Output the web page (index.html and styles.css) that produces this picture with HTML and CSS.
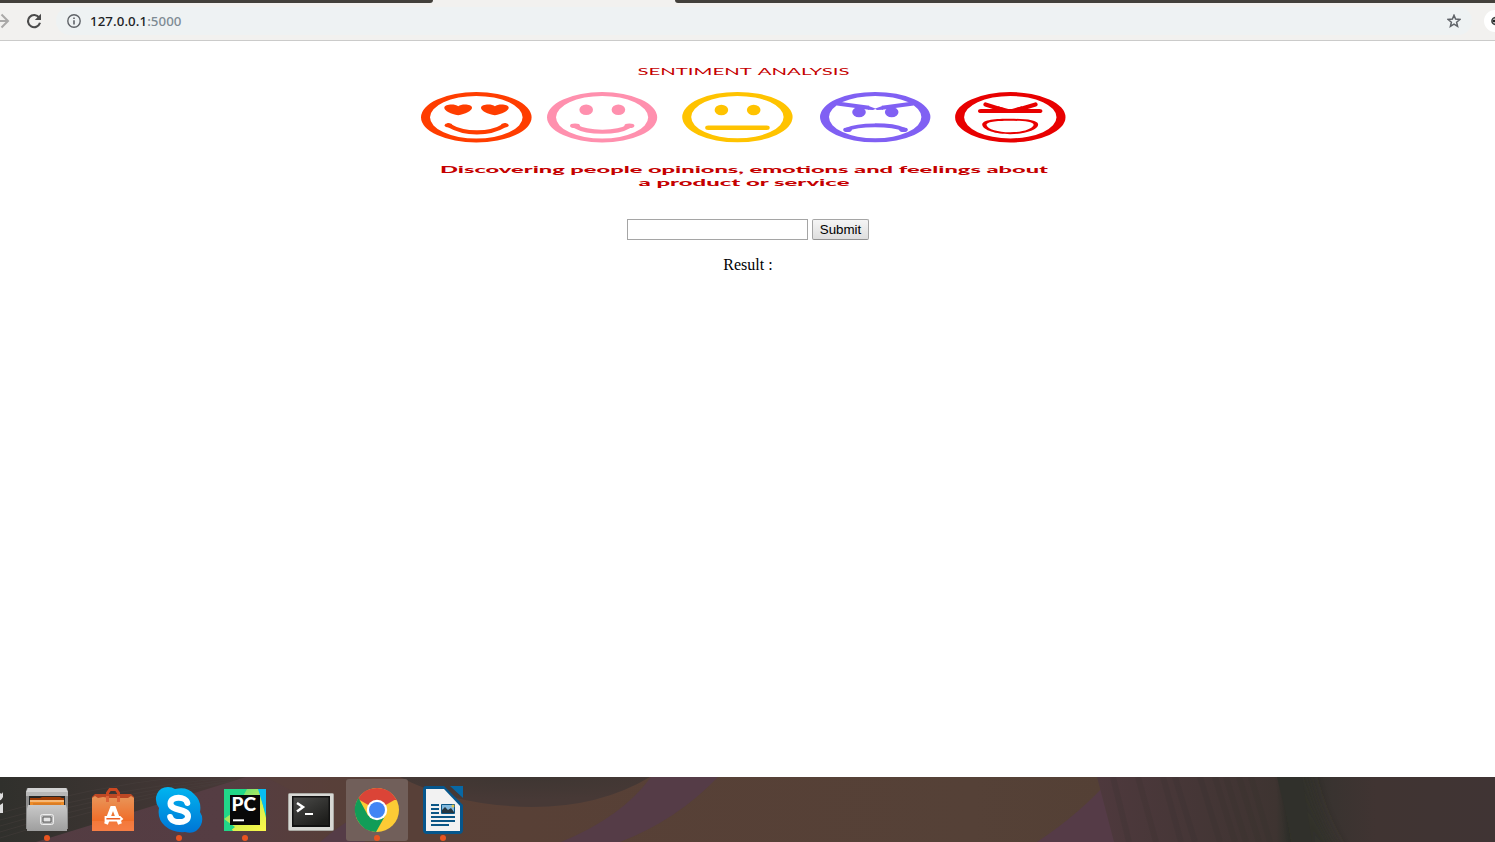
FILE: index.html
```html
<!DOCTYPE html>
<html lang="en">
<head>
<meta charset="utf-8">
<title>Sentiment Analysis</title>
<link rel="stylesheet" href="styles.css">
</head>
<body>
<header class="browser">
  <div class="tabstrip"><span class="strip-left"></span><span class="strip-right"></span></div>
  <div class="toolbar">
    <svg class="forward" width="10" height="16" viewBox="0 0 10 16"><path d="M0 8H8M1.5 1.5L8 8L1.5 14.5" fill="none" stroke="#aaa9a8" stroke-width="2"/></svg>
    <svg class="reload" width="16" height="16" viewBox="0 0 16 16"><path d="M13.2 4.7A6.1 6.1 0 1 0 14 9.8" fill="none" stroke="#4b4b4b" stroke-width="2.1"/><path d="M15 .8V7H8.8Z" fill="#4b4b4b"/></svg>
    <div class="address">
      <svg width="14" height="14" viewBox="0 0 14 14"><circle cx="7" cy="7" r="6.2" fill="none" stroke="#5f6368" stroke-width="1.4"/><path d="M7 6.2V10.6M7 3.4V5" stroke="#5f6368" stroke-width="1.6"/></svg>
      <span class="url">127.0.0.1<span class="port">:5000</span></span>
      <svg class="star" width="14" height="14" viewBox="0 0 14 14"><path d="M7 1.3L8.6 5.1L12.9 5.5L9.6 8.2L10.6 12.4L7 10.2L3.4 12.4L4.4 8.2L1.1 5.5L5.4 5.1Z" fill="none" stroke="#5f6368" stroke-width="1.5"/></svg>
    </div>
    <svg class="extension" width="11" height="22" viewBox="0 0 11 22"><circle cx="11" cy="11" r="11" fill="#fff"/><circle cx="11.5" cy="11" r="3.6" fill="#b9bcbc" stroke="#3d4141" stroke-width="1.5"/><path d="M9 10H11V12H9Z" fill="#222"/></svg>
  </div>
</header>

<main class="page">
  <svg class="banner" width="656" height="140" viewBox="415 55 656 140">
    <g fill="#c50000">
      <text x="637.5" y="75" font-size="10" textLength="212" lengthAdjust="spacingAndGlyphs">SENTIMENT <tspan dx="1">ANALYSIS</tspan></text>
      <g font-weight="900">
        <text x="440" y="173.4" font-size="10.2" textLength="608" lengthAdjust="spacingAndGlyphs">Discovering people opinions, emotions and feelings about</text>
        <text x="638.5" y="186.4" font-size="10.2" textLength="211" lengthAdjust="spacingAndGlyphs">a product or service</text>
      </g>
    </g>
    <g fill="#ff3d00">
      <path fill-rule="evenodd" d="M421 117.3a55.3 25.2 0 1 0 110.6 0a55.3 25.2 0 1 0-110.6 0ZM430 117.3a46.3 21.3 0 1 1 92.6 0a46.3 21.3 0 1 1-92.6 0Z"/>
      <path id="heart" d="M458.2 115.3C451 114 444.3 111 444.3 107.8C444.5 104 455 103.7 458.2 106.2C461.5 103.7 472 104 472 107.8C472 111 465 114 458.2 115.3Z"/>
      <use href="#heart" x="36.7"/>
      <path d="M448.5 125.2C465 134.8 489 134.8 505 125.2" fill="none" stroke="#ff3d00" stroke-width="4.2" stroke-linecap="round"/>
      <ellipse cx="448.5" cy="125.2" rx="3.8" ry="2"/><ellipse cx="504.8" cy="125.2" rx="3.8" ry="2"/>
    </g>
    <g fill="#ff90ae">
      <path fill-rule="evenodd" d="M547 117.3a55.1 25.2 0 1 0 110.2 0a55.1 25.2 0 1 0-110.2 0ZM556 117.3a46.1 21.3 0 1 1 92.2 0a46.1 21.3 0 1 1-92.2 0Z"/>
      <ellipse cx="586.2" cy="109.8" rx="6.8" ry="5.3"/><ellipse cx="618.4" cy="109.8" rx="6.8" ry="5.3"/>
      <path d="M575.5 126.4C588 133.5 617 133.5 628.8 126.4" fill="none" stroke="#ff90ae" stroke-width="4.2" stroke-linecap="round"/>
      <ellipse cx="575" cy="125.7" rx="5" ry="2.3"/><ellipse cx="629.4" cy="125.7" rx="5" ry="2.3"/>
    </g>
    <g fill="#ffc300">
      <path fill-rule="evenodd" d="M682.2 117.1a55.2 25.2 0 1 0 110.4 0a55.2 25.2 0 1 0-110.4 0ZM691.2 117.1a46.2 21.2 0 1 1 92.4 0a46.2 21.2 0 1 1-92.4 0Z"/>
      <ellipse cx="721.4" cy="110" rx="6.8" ry="5.2"/><ellipse cx="753.7" cy="110" rx="6.8" ry="5.2"/>
      <rect x="705.2" y="125.5" width="64.5" height="4.4" rx="3" ry="2.2"/>
    </g>
    <g fill="#8060f3">
      <path fill-rule="evenodd" d="M820 117.1a55.2 25.2 0 1 0 110.4 0a55.2 25.2 0 1 0-110.4 0ZM829 117.1a46.2 21.2 0 1 1 92.4 0a46.2 21.2 0 1 1-92.4 0Z"/>
      <ellipse cx="859" cy="112.1" rx="6.8" ry="5.2"/><ellipse cx="891.7" cy="112.1" rx="6.8" ry="5.2"/>
      <path d="M837 103.5L869 107.8M913.5 103.5L882 107.8" fill="none" stroke="#8060f3" stroke-width="4" />
      <path d="M868 105.8L875.3 108.4L883 105.8V109.8L877 110L875.3 109L873 110L868 109.8Z"/>
      <path d="M847 129.6C858 124 891 123.8 904 129.6" fill="none" stroke="#8060f3" stroke-width="3.9" stroke-linecap="round"/>
      <ellipse cx="847.5" cy="129.7" rx="4.3" ry="2.3"/><ellipse cx="903.5" cy="129.7" rx="4.3" ry="2.3"/>
    </g>
    <g fill="#e80000">
      <path fill-rule="evenodd" d="M955.1 117.2a55.2 25.2 0 1 0 110.4 0a55.2 25.2 0 1 0-110.4 0ZM964.1 117.2a46.2 21.2 0 1 1 92.4 0a46.2 21.2 0 1 1-92.4 0Z"/>
      <rect x="978" y="108.9" width="64.4" height="4" rx="3" ry="2"/>
      <path d="M985.5 104.4L1003 110M1035.5 104.4L1017 110" stroke="#e80000" stroke-width="4.2" stroke-linecap="round"/>
      <path d="M998 106.2L1010.2 109.4L1022 106.2V111H998Z"/>
      <path fill-rule="evenodd" d="M1010 118.8C996 118.8 982 119.7 982.2 124.8C983 130.3 996 134.2 1010 134.2S1037.5 130.3 1038.2 124.8C1038.4 119.7 1024 118.8 1010 118.8ZM1010 120.8C1020 120.8 1033.7 121.3 1033.7 125C1032 129.3 1022 132.3 1010 132.3S987.5 129.3 986.5 125C986.5 121.3 1000 120.8 1010 120.8Z"/>
    </g>
  </svg>
  <form class="form">
    <input class="entry" type="text" aria-label="Text">
    <button class="submit" type="button">Submit</button>
  </form>
  <p class="result">Result :</p>
</main>

<footer class="dock">
  <svg class="wallpaper" width="1495" height="65" viewBox="0 0 1495 65">
    <defs>
      <linearGradient id="base"><stop offset="0" stop-color="#533c42"/><stop offset=".15" stop-color="#553d43"/><stop offset=".25" stop-color="#583f35"/><stop offset=".35" stop-color="#584036"/><stop offset=".65" stop-color="#554137"/><stop offset=".74" stop-color="#544035"/></linearGradient>
      <linearGradient id="right"><stop offset="0" stop-color="#4e393d"/><stop offset=".45" stop-color="#3e3431"/><stop offset=".48" stop-color="#30302b"/><stop offset=".52" stop-color="#31302b"/><stop offset=".59" stop-color="#393330"/><stop offset=".7" stop-color="#403432"/><stop offset="1" stop-color="#403434"/></linearGradient>
      <linearGradient id="left"><stop offset="0" stop-color="#30302c"/><stop offset="1" stop-color="#493938"/></linearGradient>
      <radialGradient id="dome" cx=".5" cy="0" r=".75"><stop offset="0" stop-color="#3e3632"/><stop offset="1" stop-color="#473936"/></radialGradient>
      <filter id="soft" x="-40%" y="-20%" width="180%" height="140%"><feGaussianBlur stdDeviation="8 3"/></filter>
    </defs>
    <path fill="url(#base)" d="M0 0H1495V65H0Z"/>
    <path fill="#59413a" d="M265 0H460V65H360Q320 25 265 0Z" opacity=".6"/>
    <path fill="url(#left)" d="M0 0H246Q150 30 36 65H0Z"/>
    <g stroke="#49413d" opacity=".45" fill="none"><path d="M0 43Q110 11 235 0M0 49Q110 15 235 2M0 55Q110 20 232 4M0 61Q110 26 228 5M0 36Q90 10 180 0"/></g>
    <path fill="#553c47" d="M320 65Q335 52 350 43L365 65ZM561 65Q622 40 651 0H718Q677 43 620 65Z"/>
    <path fill="url(#dome)" d="M400 0H650Q600 30 532 30Q455 29 400 0Z"/>
    <path fill="#553b47" d="M1037 65Q1081 36 1112 0H1150V65Z"/>
    <path fill="url(#right)" d="M1097 0H1495V65H1114Z"/>
    <g stroke="#302f2b" stroke-width="6" opacity=".15"><path d="M1113 0L1129 65M1138 0L1156 65M1163 0L1181 65M1175 0L1195 65M1200 0L1220 65M1215 0L1235 65M1226 0L1246 65M1239 0L1259 65M1251 0L1270 65"/></g>
    <path fill="#30302b" d="M1290 -8H1304Q1316 42 1338 73H1304Z" filter="url(#soft)"/>
    <path fill="#30302b" d="M1277 0H1302L1312 65H1293Z"/>
  </svg>
  <div class="dock-edge"><svg width="4" height="26" viewBox="0 0 4 26"><path d="M0 2Q2 4 3 1V6Q1 10 0 9ZM0 14L3 12V22H0Z" fill="#ddd"/></svg></div>
  <div class="launcher">
    <div class="app running"><svg width="48" height="48" viewBox="0 0 48 48">
      <defs><linearGradient id="metal" x2="0" y2="1"><stop stop-color="#c9c9c9"/><stop offset="1" stop-color="#9e9e9e"/></linearGradient></defs>
      <path d="M4 2H44L45 6V43H3V6Z" fill="#8d8d8d"/><path d="M5 2H43L45 6H3Z" fill="#d2d2d2"/><path d="M3 6H45V10H3Z" fill="#b8b8b8"/><path d="M6 10H42V21H6Z" fill="#262626"/>
      <path d="M7 12H17L19 11H37L39 12H41V20H7Z" fill="#9e3c05"/><path d="M7 14H41V20H7Z" fill="#ed8b28"/><path d="M7 15H41" stroke="#ffe4c3"/><path d="M10 18H38" stroke="#c96e20"/>
      <path d="M5 19H43L44 23V45H4V23Z" fill="url(#metal)"/><rect x="17.5" y="28.5" width="13" height="10" rx="2" fill="#bbb" stroke="#eee"/><path d="M20 31H28V36H20Z" fill="#e5e5e5" stroke="#555"/>
    </svg></div>
    <div class="app"><svg width="48" height="48" viewBox="0 0 48 48">
      <defs><linearGradient id="bag" x2="0" y2="1"><stop stop-color="#e8965a"/><stop offset=".7" stop-color="#f06d29"/><stop offset="1" stop-color="#f77940"/></linearGradient></defs>
      <path d="M3 11L6 8H42L45 11V45H3Z" fill="#bd4824"/><path d="M3 12L6 10L9 12L14 11L20 12H39L42 10L45 12V45H3Z" fill="url(#bag)"/><path d="M18.5 15V7L21 3.5H27L29.5 7V15" fill="none" stroke="#cc4821" stroke-width="3"/><path d="M18.5 10V16M29.5 10V16" stroke="#de6237" stroke-width="3"/><path d="M3 35H45V45H3Z" fill="#f5844c" opacity=".5"/>
      <path d="M17 38L23 22H25L31 38" fill="none" stroke="#fff" stroke-width="4"/><path d="M16.5 31H31L33 33L31 34.5H16.5Z" fill="#ed5f24" stroke="#fff" stroke-width="1.8"/>
    </svg></div>
    <div class="app running"><svg width="48" height="48" viewBox="0 0 48 48">
      <defs><linearGradient id="blue" x2="0" y2="1"><stop stop-color="#00b5f0"/><stop offset="1" stop-color="#0075d5"/></linearGradient></defs>
      <path d="M13 1Q17 1 20 3Q32 0 39 8Q47 15 45 26Q49 32 46 39Q41 49 30 46Q18 47 10 40Q2 33 4 22Q-1 15 2 8Q5 1 13 1Z" fill="url(#blue)"/><path d="M32.3 17C31 10 15.5 10 15.5 17.5C15.5 25.5 33 22 33 30.2C33 38 17 37.8 15.2 31" fill="none" stroke="#fff" stroke-width="6" stroke-linecap="round"/>
    </svg></div>
    <div class="app running"><svg width="48" height="48" viewBox="0 0 48 48">
      <defs><linearGradient id="lime" x1=".2" y1="0" x2="1" y2="1"><stop stop-color="#4fdc80"/><stop offset=".6" stop-color="#dcf04e"/><stop offset="1" stop-color="#fcf84a"/></linearGradient></defs>
      <path d="M3 3H45V45H3Z" fill="#21d789"/><path d="M26 3H38L45 32V45H12L3 33L14 25Z" fill="url(#lime)"/><path d="M37 3H45V29Z" fill="#08bdf2"/><path d="M3 33L14 41L9 45H3Z" fill="#21d789"/><path d="M9 9H39V39H9Z" fill="#080808"/><text x="10.6" y="24.5" class="pc" textLength="24.5" lengthAdjust="spacingAndGlyphs">PC</text><path d="M12 34.3H23" stroke="#fff" stroke-width="2"/>
    </svg></div>
    <div class="app"><svg width="48" height="48" viewBox="0 0 48 48">
      <defs><linearGradient id="screen" x2=".7" y2="1"><stop stop-color="#4b4b49"/><stop offset=".5" stop-color="#343432"/><stop offset="1" stop-color="#1e1e1c"/></linearGradient></defs>
      <rect x="1.5" y="7.5" width="45" height="37" rx="1" fill="#d8d8d4" stroke="#aaa9a4"/><path d="M5 10H43V41H5Z" fill="#111"/><path d="M6.5 11.5H41.5V39H6.5Z" fill="url(#screen)"/><path d="M10 17L16 21L10 25.5" fill="none" stroke="#fff" stroke-width="2.5"/><path d="M18 28H26" stroke="#fff" stroke-width="2"/>
    </svg></div>
    <div class="app active running"><svg width="48" height="48" viewBox="0 0 48 48">
      <circle cx="24" cy="24" r="22" fill="#fccb35"/><path d="M24 24L4.9 13A22 22 0 0 1 43.1 13Z" fill="#db4437"/><path d="M24 13H43.1L43.8 14H25Z" fill="#db4437"/><path d="M5.5 12L15 29.5L24 34L32 30L23 46A22 22 0 0 1 5.5 12Z" fill="#119d58"/><circle cx="24" cy="24" r="10.2" fill="#fff"/><circle cx="24" cy="24" r="8" fill="#4285f4"/>
    </svg></div>
    <div class="app running"><svg width="48" height="48" viewBox="0 0 48 48">
      <path d="M7 0H25L44 19V44Q44 48 40 48H8Q4 48 4 44V4Q4 0 7 0Z" fill="#06568c"/><path d="M7 3H25L41 20V45H7Z" fill="#f2f2f2"/><path d="M31 0H44V12Z" fill="#0768a5"/><path d="M12 19H20M12 23H20M12 27H20M12 31H36M12 35H36M12 39H30" stroke="#0b5685" stroke-width="2"/><path d="M22.5 18.5H35.5V27.5H22.5Z" fill="#82b9de" stroke="#0b5685"/><path d="M23 27V24L26 21L29 24L32 22L35 26V27Z" fill="#27363f"/><circle cx="34" cy="20" r="1.5" fill="#e5c94c"/>
    </svg></div>
  </div>
</footer>
</body>
</html>
```
FILE: styles.css
```css
* { box-sizing: border-box; }
body { margin: 0; height: 842px; display: flex; flex-direction: column; overflow: hidden; background: #fff; }
svg { display: block; flex: none; }
.browser { height: 41px; background: #f2f1ef; border-bottom: 1px solid #cbcbca; }
.tabstrip { height: 3px; display: flex; justify-content: space-between; }
.strip-left { width: 433px; background: #43403b; border-radius: 0 0 5px 0; }
.strip-right { width: 820px; background: #43403b; border-radius: 0 0 0 5px; }
.toolbar { height: 36px; display: flex; align-items: center; }
.reload { margin-left: 16px; }
.address { height: 28px; margin-left: 14px; flex: 1; border-radius: 14px; background: #eef2f3; display: flex; align-items: center; padding: 0 11px; }
.url { margin-left: 9px; font: 500 13.3px/20px "Noto Sans", sans-serif; letter-spacing: .07px; color: #202124; }
.port { color: #7e8b94; }
.star { margin-left: auto; }
.extension { margin-left: 12px; }
.page { height: 736px; display: flex; flex-direction: column; align-items: center; padding-top: 14px; }
.banner { font-family: Lato, sans-serif; margin-right: 9px; }
.form { margin-top: 24px; display: flex; gap: 4px; }
.entry { width: 181px; height: 21px; border: 1px solid #a5a5a5; padding: 1px; }
.submit { width: 57px; height: 21px; border: 1px solid #a5a5a5; border-bottom-color: #929292; border-radius: 2px; padding: 0 0 0 1px; color: #000; background: linear-gradient(#f5f5f5, #dedede); font: 13.333px "Liberation Sans", sans-serif; }
.result { margin: 16px 0; padding-left: 1px; font: 16px/18px "Liberation Serif", serif; color: #000; }
.dock { height: 65px; position: relative; overflow: hidden; display: flex; }
.wallpaper { position: absolute; inset: 0; }
.dock-edge { width: 16px; padding-top: 14px; position: relative; }
.launcher { display: flex; gap: 4px; padding-top: 2px; position: relative; }
.app { width: 62px; height: 62px; padding: 7px; border-radius: 3px; position: relative; }
.active { background: #715f5a; }
.running::after { content: ""; position: absolute; left: 28px; bottom: 0; width: 6px; height: 6px; border-radius: 50%; background: #e95420; }
.pc { font: 900 18px Lato, sans-serif; fill: #fff; }
```
